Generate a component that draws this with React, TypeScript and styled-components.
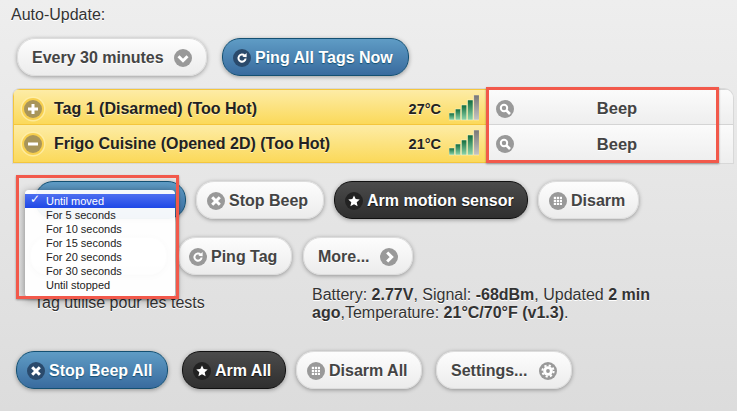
import React from 'react'
import styled, { createGlobalStyle, css } from 'styled-components'

type Tone = 'light' | 'blue' | 'dark'
type Glyph = 'down' | 'right' | 'refresh' | 'plus' | 'minus' | 'search' | 'close' | 'star' | 'grid' | 'gear'

const Global = createGlobalStyle`
  html, body {
    margin: 0;
    height: 411px;
    overflow: hidden;
    background: #e0e0e0;
  }
  * { box-sizing: border-box; }
`

const Page = styled.div`
  position: relative;
  width: 737px;
  height: 411px;
  overflow: hidden;
  background: linear-gradient(#eeeeee, #dcdcdc);
  font-family: "Liberation Sans", Arial, sans-serif;
  color: #333;
`

const Label = styled.div`
  height: 27px;
  padding-left: 11px;
  font-size: 16px;
  line-height: 29px;
  text-shadow: 0 1px 0 #fff;
`

const Toolbar = styled.div<{ $top: number; $left: number; $gap: number }>`
  display: flex;
  gap: ${p => p.$gap}px;
  margin-top: ${p => p.$top}px;
  padding-left: ${p => p.$left}px;
`

const toneStyles = {
  light: css`
    border: 1px solid #ddd;
    background: linear-gradient(#fdfdfd, #ececec);
    color: #444;
    text-shadow: 0 1px 0 #fff;
  `,
  blue: css`
    border: 1px solid #145072;
    background: linear-gradient(#5f9cc5, #396b9e);
    color: #fff;
    text-shadow: 0 1px 1px #145072;
  `,
  dark: css`
    border: 1px solid #111;
    background: linear-gradient(#4b4b4b, #2f2f2f);
    color: #fff;
    text-shadow: 0 1px 1px #111;
  `,
}

const Button = styled.div<{ $tone: Tone; $width: number; $lead?: number; $trail?: boolean }>`
  display: flex;
  align-items: center;
  gap: 4px;
  flex: 0 0 ${p => p.$width}px;
  height: 38px;
  margin-left: ${p => p.$lead ?? 0}px;
  padding: 1px ${p => (p.$trail ? 14 : 10)}px 0 10px;
  border-radius: 18px;
  font-size: 16px;
  font-weight: bold;
  white-space: nowrap;
  box-shadow: 0 1px 4px rgba(0, 0, 0, 0.35);
  ${p => toneStyles[p.$tone]}
`

const Caption = styled.span`
  flex: 1;
  padding-left: 4px;
`

const Disc = styled.svg`
  flex: 0 0 18px;
  width: 18px;
  height: 18px;
`

const Toggle = styled.svg`
  flex: 0 0 26px;
  width: 26px;
  height: 26px;
`

const List = styled.div`
  position: relative;
  width: 720px;
  margin: 13px 0 0 13px;
  border-radius: 7px 9px 0 0;
  overflow: hidden;
  box-shadow: 0 0 0 1px #d8d8d8;
`

const Row = styled.div<{ $first?: boolean }>`
  display: flex;
  height: ${p => (p.$first ? 35 : 39)}px;
`

const Tag = styled.div<{ $first?: boolean }>`
  display: flex;
  align-items: center;
  flex: 0 0 473px;
  padding: ${p => (p.$first ? 3 : 0)}px 7px 0 6px;
  border: 1px solid #f4c63d;
  border-width: 1px 0 ${p => (p.$first ? 0 : 1)}px 1px;
  background: linear-gradient(#fdeca6, #fbd95a);
  color: #222;
  font-size: 16px;
  font-weight: bold;
  text-shadow: 0 1px 0 #fff3c0;
`

const TagName = styled.span`
  flex: 1;
  padding-left: 8px;
`

const Temp = styled.span`
  margin-right: 8px;
  font-size: 14.5px;
`

const Bars = styled.svg`
  width: 30px;
  height: 26px;
  margin-bottom: 2px;
`

const Action = styled.div<{ $first?: boolean }>`
  display: flex;
  align-items: center;
  flex: 1;
  padding: ${p => (p.$first ? 3 : 0)}px 0 0 10px;
  border-top: 1px solid #d4d4d4;
  background: linear-gradient(#fbfbfb, #eeeeee);
  color: #444;
  font-size: 16.5px;
  font-weight: bold;
  text-shadow: 0 1px 0 #fff;
`

const ActionText = styled.span`
  width: 206px;
  text-align: center;
`

const Highlight = styled.div<{ $x: number; $y: number; $w: number; $h: number }>`
  position: absolute;
  left: ${p => p.$x}px;
  top: ${p => p.$y}px;
  width: ${p => p.$w}px;
  height: ${p => p.$h}px;
  border: 3px solid #f2594b;
  box-shadow: 0 1px 2px rgba(0, 0, 0, 0.35);
`

const Info = styled.div`
  display: flex;
  margin-top: 11px;
  height: 36px;
  font-size: 16px;
  line-height: 18px;
`

const Note = styled.div`
  flex: 0 0 312px;
  padding: 8px 0 0 34px;
  text-shadow: 0 1px 0 #fff;
`

const Stats = styled.div`
  text-shadow: 0 1px 0 #fff;
  white-space: nowrap;
`

const Menu = styled.div`
  position: absolute;
  left: 25px;
  top: 190px;
  width: 150px;
  height: 107px;
  padding: 4px 0;
  border-radius: 4px;
  background: rgba(255, 255, 255, 0.94);
  box-shadow: 0 2px 8px rgba(0, 0, 0, 0.45);
  font-size: 11px;
`

const MenuItem = styled.div<{ $active?: boolean }>`
  position: relative;
  height: 14px;
  padding-left: 21px;
  line-height: 14px;
  color: ${p => (p.$active ? '#fff' : '#222')};
  background: ${p => (p.$active ? 'linear-gradient(#4d6ff0, #1f48e6)' : 'transparent')};
`

const Check = styled.span`
  position: absolute;
  left: 5px;
  top: -2px;
  font-family: "DejaVu Sans", sans-serif;
  font-size: 12px;
  font-weight: bold;
`

const Icon = ({ name, fill = '#999' }: { name: Glyph; fill?: string }) => (
  <Disc viewBox="0 0 18 18">
    <circle cx="9" cy="9" r="9" fill={fill} />
    <GlyphShape name={name} bg={fill} />
  </Disc>
)

const GlyphShape = ({ name, bg }: { name: Glyph; bg: string }) => {
  const line = { fill: 'none', stroke: '#fff', strokeWidth: 3 }
  switch (name) {
    case 'down':
      return <path d="M4.5 7.2 9 11.7l4.5-4.5" {...line} />
    case 'right':
      return <path d="M7.2 4.5 11.7 9l-4.5 4.5" {...line} />
    case 'refresh':
      return (
        <g>
          <path d="M11.6 6.6A3.6 3.6 0 1 0 12.6 9.5" fill="none" stroke="#fff" strokeWidth="2" />
          <path d="M9.4 7.8 13.6 8.2V4z" fill="#fff" />
        </g>
      )
    case 'plus':
      return <path d="M9 4v10M4 9h10" {...line} />
    case 'minus':
      return <path d="M4 9h10" {...line} />
    case 'search':
      return (
        <g>
          <circle cx="8" cy="8" r="3.2" fill="none" stroke="#fff" strokeWidth="2" />
          <path d="M10.5 10.5 14 14" stroke="#fff" strokeWidth="2.6" />
        </g>
      )
    case 'close':
      return <path d="M5.2 5.2l7.6 7.6M12.8 5.2l-7.6 7.6" {...line} />
    case 'star':
      return <path d="M9 3.4l1.7 3.7 4 .4-3 2.7.9 4L9 12.2l-3.6 2 .9-4-3-2.7 4-.4z" fill="#fff" />
    case 'grid':
      return (
        <g fill="#fff">
          {[5, 8, 11].flatMap(x =>
            [5, 8, 11].map(y => <rect key={`${x}-${y}`} x={x - 0.2} y={y - 0.2} width="2.2" height="2.2" />),
          )}
        </g>
      )
    case 'gear':
      return (
        <g>
          <circle cx="9" cy="9" r="4.8" fill="#fff" />
          <circle cx="9" cy="9" r="5.6" fill="none" stroke="#fff" strokeWidth="2" strokeDasharray="2.2 2.2" />
          <circle cx="9" cy="9" r="1.9" fill={bg} />
        </g>
      )
  }
}

const RoundToggle = ({ name }: { name: Glyph }) => (
  <Toggle viewBox="0 0 26 26">
    <circle cx="13" cy="13" r="12.5" fill="#fff1b0" opacity="0.7" />
    <circle cx="13" cy="13" r="11" fill="#f7cf4e" />
    <g transform="translate(4 4)">
      <circle cx="9" cy="9" r="9" fill="#a8955a" />
      <GlyphShape name={name} bg="#a8955a" />
    </g>
  </Toggle>
)

const Signal = () => (
  <Bars viewBox="0 0 30 26">
    <defs>
      <linearGradient id="bar-on" x1="0" y1="0" x2="0" y2="1">
        <stop offset="0" stopColor="#0f6b3c" />
        <stop offset="1" stopColor="#8fd6ac" />
      </linearGradient>
      <linearGradient id="bar-off" x1="0" y1="0" x2="0" y2="1">
        <stop offset="0" stopColor="#777" />
        <stop offset="1" stopColor="#c4c4c4" />
      </linearGradient>
    </defs>
    {[7, 11, 15, 20, 25].map((h, i) => (
      <rect
        key={h}
        x={i * 6.2}
        y={25 - h}
        width="5.4"
        height={h}
        fill={i < 4 ? 'url(#bar-on)' : 'url(#bar-off)'}
        stroke="#fff6cf"
        strokeWidth="0.5"
      />
    ))}
  </Bars>
)

const tags = [
  { name: 'Tag 1 (Disarmed) (Too Hot)', temp: '27°C', toggle: 'plus' as Glyph },
  { name: 'Frigo Cuisine (Opened 2D) (Too Hot)', temp: '21°C', toggle: 'minus' as Glyph },
]

const beepTimes = [
  'Until moved',
  'For 5 seconds',
  'For 10 seconds',
  'For 15 seconds',
  'For 20 seconds',
  'For 30 seconds',
  'Until stopped',
]

const BLUE_DISC = '#2a4a6c'
const DARK_DISC = '#222'

export default function App() {
  return (
    <Page>
      <Global />
      <Label>Auto-Update:</Label>

      <Toolbar $top={11} $left={17} $gap={15}>
        <Button $tone="light" $width={190} $trail>
          <Caption>Every 30 minutes</Caption>
          <Icon name="down" />
        </Button>
        <Button $tone="blue" $width={187}>
          <Icon name="refresh" fill={BLUE_DISC} />
          Ping All Tags Now
        </Button>
      </Toolbar>

      <List>
        {tags.map((t, i) => (
          <Row key={t.name} $first={i === 0}>
            <Tag $first={i === 0}>
              <RoundToggle name={t.toggle} />
              <TagName>{t.name}</TagName>
              <Temp>{t.temp}</Temp>
              <Signal />
            </Tag>
            <Action $first={i === 0}>
              <Icon name="search" />
              <ActionText>Beep</ActionText>
            </Action>
          </Row>
        ))}
      </List>

      <Toolbar $top={18} $left={35} $gap={10}>
        <Button $tone="blue" $width={151} />
        <Button $tone="light" $width={128}>
          <Icon name="close" />
          Stop Beep
        </Button>
        <Button $tone="dark" $width={194}>
          <Icon name="star" fill={DARK_DISC} />
          Arm motion sensor
        </Button>
        <Button $tone="light" $width={101}>
          <Icon name="grid" />
          Disarm
        </Button>
      </Toolbar>

      <Toolbar $top={18} $left={30} $gap={11}>
        <Button $tone="light" $width={137} />
        <Button $tone="light" $width={114}>
          <Icon name="refresh" />
          Ping Tag
        </Button>
        <Button $tone="light" $width={110} $trail>
          <Caption>More...</Caption>
          <Icon name="right" />
        </Button>
      </Toolbar>

      <Info>
        <Note>Tag utilisé pour les tests</Note>
        <Stats>
          <div>
            Battery: <b>2.77V</b>, Signal: <b>-68dBm</b>, Updated <b>2 min</b>
          </div>
          <div>
            <b>ago</b>,Temperature: <b>21°C/70°F (v1.3)</b>.
          </div>
        </Stats>
      </Info>

      <Toolbar $top={29} $left={16} $gap={10}>
        <Button $tone="blue" $width={152}>
          <Icon name="close" fill={BLUE_DISC} />
          Stop Beep All
        </Button>
        <Button $tone="dark" $width={104} $lead={4}>
          <Icon name="star" fill={DARK_DISC} />
          Arm All
        </Button>
        <Button $tone="light" $width={126}>
          <Icon name="grid" />
          Disarm All
        </Button>
        <Button $tone="light" $width={136} $lead={4} $trail>
          <Caption>Settings...</Caption>
          <Icon name="gear" />
        </Button>
      </Toolbar>

      <Menu>
        {beepTimes.map((label, i) => (
          <MenuItem key={label} $active={i === 0}>
            {i === 0 && <Check>✓</Check>}
            {label}
          </MenuItem>
        ))}
      </Menu>

      <Highlight $x={486} $y={87} $w={233} $h={76} />
      <Highlight $x={16} $y={175} $w={163} $h={124} />
    </Page>
  )
}
